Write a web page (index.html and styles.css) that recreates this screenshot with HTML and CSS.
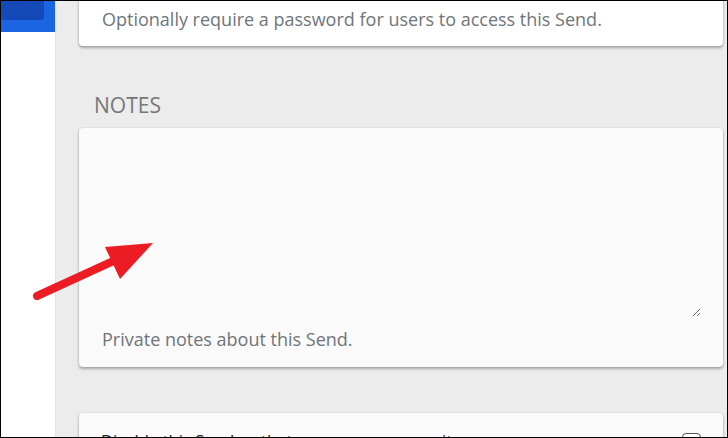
FILE: index.html
```html
<!DOCTYPE html>
<html lang="en">
<head>
<meta charset="utf-8">
<title>Send notes</title>
<link rel="stylesheet" href="styles.css">
</head>
<body>
<div class="frame">
  <aside class="sidebar">
    <div class="sidebar-top"><div class="sidebar-active"></div></div>
  </aside>
  <main class="main">
    <section class="card card-password">
      <p class="hint">Optionally require a password for users to access this Send.</p>
    </section>
    <h2 class="label">NOTES</h2>
    <section class="card card-notes">
      <textarea class="notes-input" aria-label="Notes"></textarea>
      <p class="hint">Private notes about this Send.</p>
    </section>
    <section class="card card-disable">
      <label class="check-row">
        <span>Disable this Send so that no one can access it.</span>
        <span class="checkbox"></span>
      </label>
    </section>
  </main>
  <svg class="arrow" width="728" height="438" viewBox="0 0 728 438" aria-hidden="true">
    <line x1="37" y1="296" x2="122" y2="257" stroke="#ed1c24" stroke-width="8" stroke-linecap="round"/>
    <polygon points="153,243 105,247 120,279" fill="#ed1c24"/>
  </svg>
</div>
</body>
</html>
```

FILE: styles.css
```css
* { box-sizing: border-box; }
html, body { margin: 0; padding: 0; }
body {
  font-family: "Open Sans", "Liberation Sans", sans-serif;
  background: #ffffff;
}
.frame {
  position: relative;
  width: 728px;
  height: 438px;
  border: 1px solid #000;
  display: flex;
  overflow: hidden;
  background: #ececec;
}
.sidebar {
  width: 55px;
  flex: none;
  background: #ffffff;
  border-right: 1px solid #e2e2e2;
}
.sidebar-top {
  height: 31px;
  background: #1b64e2;
}
.sidebar-active {
  width: 43px;
  height: 19px;
  background: #1549b8;
  border-bottom-right-radius: 4px;
}
.main {
  flex: 1;
  padding: 0 4px 0 23px;
  display: flex;
  flex-direction: column;
  min-width: 0;
}
.card {
  border-radius: 4px;
  box-shadow: 0 2px 3px rgba(0,0,0,0.3), 0 0 2px rgba(0,0,0,0.12);
  flex: none;
}
.card-password {
  background: #ffffff;
  margin-top: -20px;
  padding: 26px 22px 15px 23px;
}
.hint {
  margin: 0;
  font-size: 18px;
  line-height: 24px;
  color: #6f757b;
  white-space: nowrap;
}
.label {
  margin: 45px 0 0 15px;
  font-size: 21px;
  font-weight: 400;
  line-height: 28px;
  color: #777777;
}
.card-notes {
  margin-top: 9px;
  background: #fafafa;
  padding: 0 22px 16px 23px;
  display: flex;
  flex-direction: column;
}
.notes-input {
  height: 189px;
  border: 0;
  background: transparent;
  resize: vertical;
  font-family: inherit;
  font-size: 18px;
  outline: none;
  padding: 0;
  margin: 0;
  display: block;
}
.card-notes .hint { margin-top: 10px; }
.card-disable {
  margin-top: 46px;
  background: #fafafa;
  height: 60px;
  padding: 16px 22px 0 22px;
}
.check-row {
  display: flex;
  justify-content: space-between;
  align-items: flex-start;
  font-size: 16.7px;
  line-height: 24px;
  color: #212529;
  white-space: nowrap;
}
.checkbox {
  width: 19px;
  height: 19px;
  margin-top: 4px;
  border: 1px solid #555;
  border-radius: 4px;
  background: #fff;
}
.arrow {
  position: absolute;
  left: -1px;
  top: -1px;
  pointer-events: none;
}
```
